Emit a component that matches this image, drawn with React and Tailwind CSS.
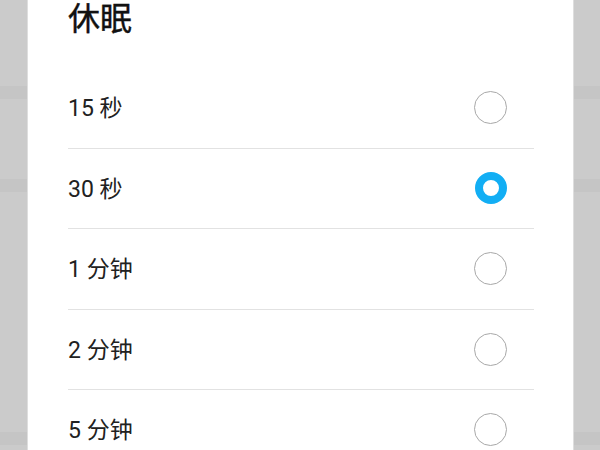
import React from 'react';

const options = [
  { label: '15 秒', checked: false },
  { label: '30 秒', checked: true },
  { label: '1 分钟', checked: false },
  { label: '2 分钟', checked: false },
  { label: '5 分钟', checked: false },
];

const Radio = ({ checked }) =>
  checked ? (
    <div className="w-[32px] h-[32px] rounded-full border-[8px] border-[#12aef4] bg-white" />
  ) : (
    <div className="w-[33px] h-[33px] rounded-full border-[1.5px] border-[#a8a8a8] bg-white" />
  );

export default function App() {
  return (
    <div
      className="relative w-[600px] h-[450px] overflow-hidden bg-[#cbcbcb]"
      style={{ fontFamily: 'Roboto, "Noto Sans CJK SC", sans-serif' }}
    >
      {/* list behind the dialog */}
      <div className="h-[86px]" />
      <div className="h-[13px] bg-[#c5c5c5]" />
      <div className="h-[80px]" />
      <div className="h-[13px] bg-[#c5c5c5]" />
      <div className="h-[240px]" />
      <div className="h-[13px] bg-[#c5c5c5]" />

      {/* dialog */}
      <div className="absolute left-[27px] top-0 w-[547px] h-[450px] bg-white pl-[40px] pr-[39px] border-l border-r border-[#dedede]">
        <div className="h-[68px]">
          <div className="text-[32px] leading-[38px] text-[#111111] [-webkit-text-stroke:0.4px_#111111]">休眠</div>
        </div>
        {options.map((o) => (
          <div
            key={o.label}
            className="h-[80.5px] flex items-center justify-between border-b border-[#e2e2e2] pr-[27px]"
          >
            <span className="text-[23px] text-[#212121] mt-[3px]">{o.label}</span>
            <Radio checked={o.checked} />
          </div>
        ))}
      </div>
    </div>
  );
}
